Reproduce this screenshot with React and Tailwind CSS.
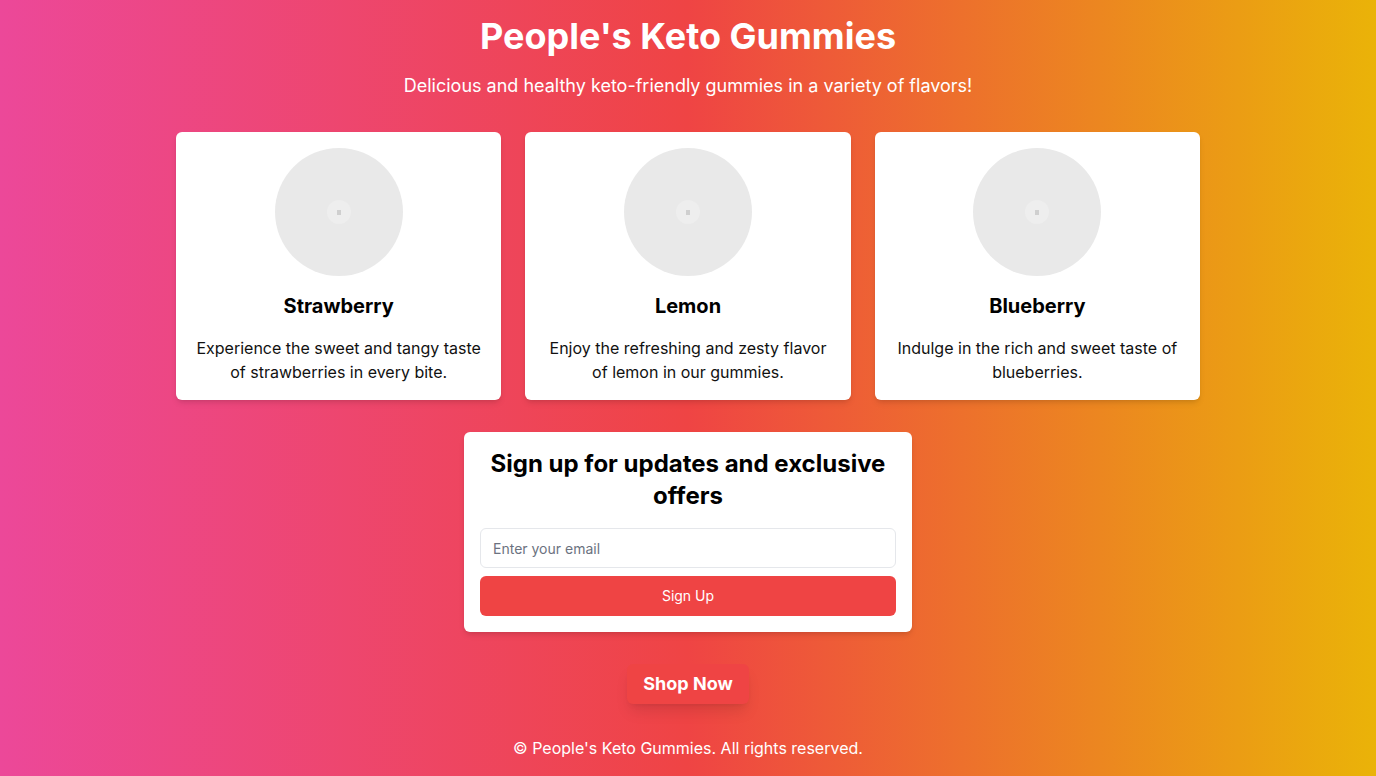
const flavors = [
  {
    name: "Strawberry",
    text: "Experience the sweet and tangy taste of strawberries in every bite.",
  },
  {
    name: "Lemon",
    text: "Enjoy the refreshing and zesty flavor of lemon in our gummies.",
  },
  {
    name: "Blueberry",
    text: "Indulge in the rich and sweet taste of blueberries.",
  },
];

const Placeholder = () => (
  <div className="w-32 h-32 rounded-full bg-[#e9e9e9] mx-auto flex items-center justify-center">
    <div className="w-6 h-6 rounded-full bg-[#eeeeee] flex items-center justify-center">
      <div className="w-[4px] h-[5px] bg-[#cfcfcf]" />
    </div>
  </div>
);

const App = () => {
  return (
    <div
      className="min-h-screen bg-[linear-gradient(to_right,#ec4899,#ef4444,#eab308)] p-4 flex flex-col items-center text-center"
      style={{ fontFamily: "Inter, 'Noto Sans', sans-serif" }}
    >
      <h1 className="text-4xl font-bold text-white mb-4">
        People's Keto Gummies
      </h1>
      <p className="text-lg text-white mb-8">
        Delicious and healthy keto-friendly gummies in a variety of flavors!
      </p>

      <div className="grid grid-cols-3 gap-6 w-full max-w-5xl">
        {flavors.map((f) => (
          <div key={f.name} className="bg-white rounded-md shadow-md p-4">
            <Placeholder />
            <h2 className="text-xl font-bold text-black mt-4">{f.name}</h2>
            <p className="text-base text-[#111111] mt-4">{f.text}</p>
          </div>
        ))}
      </div>

      <div className="bg-white rounded-md shadow-md p-4 w-full max-w-md mt-8">
        <h2 className="text-2xl font-bold text-black mb-4">
          Sign up for updates and exclusive offers
        </h2>
        <input
          type="email"
          placeholder="Enter your email"
          className="w-full h-10 px-3 text-sm border border-[#e5e7eb] rounded-md placeholder-[#6b7280] outline-none"
        />
        <button className="w-full h-10 mt-2 bg-[#ef4444] text-white text-sm rounded-md">
          Sign Up
        </button>
      </div>

      <button className="mt-8 bg-[#ef4444] text-white text-lg font-bold px-4 h-10 rounded-md shadow-lg">
        Shop Now
      </button>

      <p className="mt-8 text-white text-base">
        © People's Keto Gummies. All rights reserved.
      </p>
    </div>
  );
};

export default App;
